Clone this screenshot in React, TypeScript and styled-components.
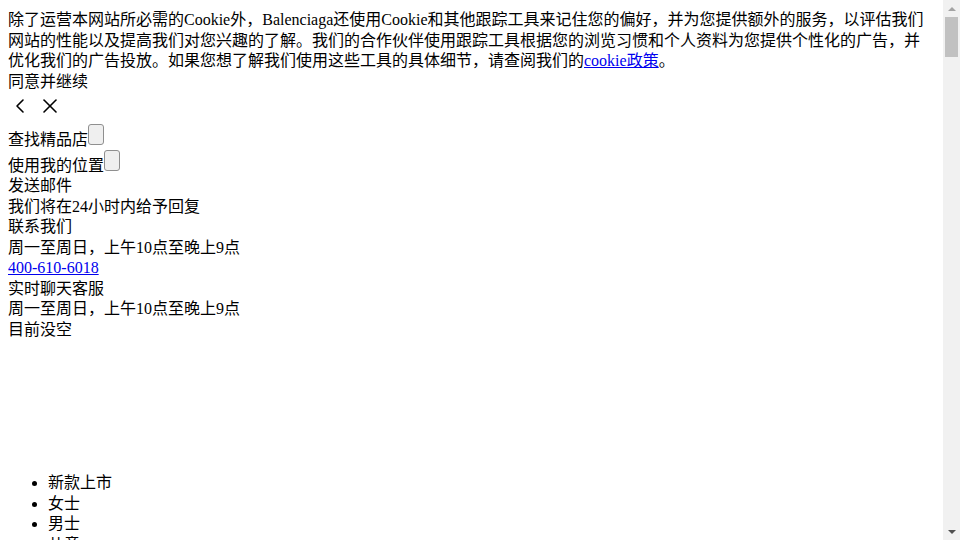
import React from "react";
import styled, { createGlobalStyle } from "styled-components";
import { ChevronLeft, X } from "lucide-react";

const GlobalStyle = createGlobalStyle`
  body {
    margin: 10px 25px 8px 8px;
    font-family: "Liberation Serif", "Noto Sans CJK SC", serif;
    font-size: 16px;
    line-height: 20.5px;
    color: #000;
    background: #fff;
  }
`;

const Notice = styled.div``;

const Link = styled.a`
  color: #0000ee;
  text-decoration: underline;
`;

const Line = styled.div``;

const IconRow = styled.div`
  display: flex;
  align-items: center;
  gap: 6px;
  padding: 2px 0 6px;
`;

const IconWrap = styled.span`
  display: inline-flex;
  width: 24px;
  height: 24px;
  color: #000;
`;

const FieldRow = styled.div`
  display: flex;
  align-items: flex-end;
`;

const EmptyButton = styled.button`
  box-sizing: border-box;
  width: 16px;
  height: 21px;
  margin: 0 0 5px;
  padding: 0;
  background: #efefef;
  border: 1px solid #8f8f8f;
  border-radius: 3px;
`;

const Spacer = styled.div`
  height: 117px;
`;

const Nav = styled.ul`
  margin: 16px 0;
  padding-left: 40px;
`;

/* the browser's scrollbar, as seen in the screenshot */
const ScrollTrack = styled.div`
  position: fixed;
  top: 0;
  right: 0;
  bottom: 0;
  width: 17px;
  background: #f1f1f1;
  display: flex;
  flex-direction: column;
  align-items: center;
`;

const Arrow = styled.div<{ $down?: boolean; $color: string }>`
  height: 17px;
  width: 17px;
  display: flex;
  align-items: center;
  justify-content: center;
  margin-top: ${(p) => (p.$down ? "auto" : "0")};
  &::after {
    content: "";
    border-left: 4px solid transparent;
    border-right: 4px solid transparent;
    ${(p) =>
      p.$down
        ? `border-top: 4px solid ${p.$color};`
        : `border-bottom: 4px solid ${p.$color};`}
  }
`;

const Thumb = styled.div`
  width: 13px;
  height: 40px;
  background: #c1c1c1;
`;

const App = () => {
  return (
    <>
      <GlobalStyle />
      <Notice>
        除了运营本网站所必需的Cookie外，Balenciaga还使用Cookie和其他跟踪工具来记住您的偏好，并为您提供额外的服务，以评估我们
        <br />
        网站的性能以及提高我们对您兴趣的了解。我们的合作伙伴使用跟踪工具根据您的浏览习惯和个人资料为您提供个性化的广告，并
        <br />
        优化我们的广告投放。如果您想了解我们使用这些工具的具体细节，请查阅我们的
        <Link href="#">cookie政策</Link>。
      </Notice>
      <Line>同意并继续</Line>
      <IconRow>
        <IconWrap>
          <ChevronLeft size={24} strokeWidth={1.6} />
        </IconWrap>
        <IconWrap>
          <X size={24} strokeWidth={1.6} />
        </IconWrap>
      </IconRow>
      <FieldRow>
        <span>查找精品店</span>
        <EmptyButton />
      </FieldRow>
      <FieldRow>
        <span>使用我的位置</span>
        <EmptyButton />
      </FieldRow>
      <Line>发送邮件</Line>
      <Line>我们将在24小时内给予回复</Line>
      <Line>联系我们</Line>
      <Line>周一至周日，上午10点至晚上9点</Line>
      <Line>
        <Link href="#">400-610-6018</Link>
      </Line>
      <Line>实时聊天客服</Line>
      <Line>周一至周日，上午10点至晚上9点</Line>
      <Line>目前没空</Line>
      <Spacer />
      <Nav>
        <li>新款上市</li>
        <li>女士</li>
        <li>男士</li>
        <li>儿童</li>
        <li>手袋</li>
        <li>鞋履</li>
        <li>配饰</li>
        <li>礼品</li>
      </Nav>
      <ScrollTrack>
        <Arrow $color="#a3a3a3" />
        <Thumb />
        <Arrow $down $color="#505050" />
      </ScrollTrack>
    </>
  );
};

export default App;
